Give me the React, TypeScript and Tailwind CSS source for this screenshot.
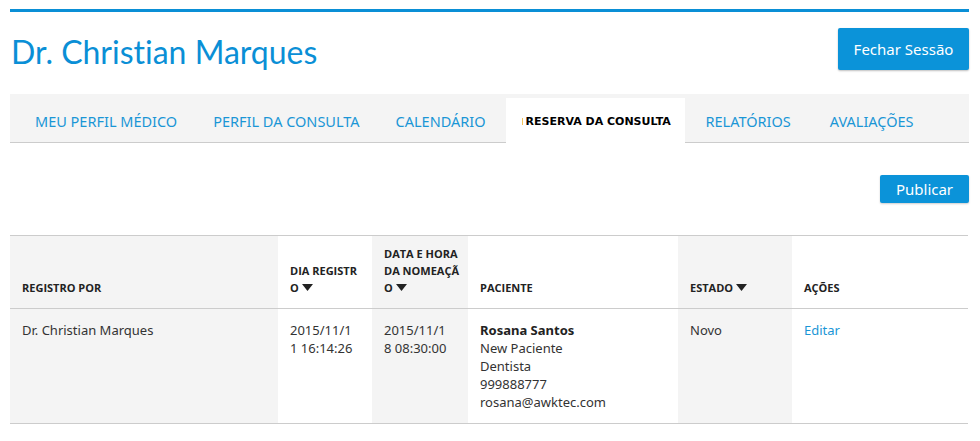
import React from "react";

const Caret = () => (
  <svg width="11" height="7" viewBox="0 0 11 7" className="inline-block ml-[3px] align-[1px]">
    <path d="M0 0 H11 L5.5 7 Z" fill="#222" />
  </svg>
);

export default function App() {
  const tabs = ["MEU PERFIL MÉDICO", "PERFIL DA CONSULTA", "CALENDÁRIO"];
  const tabs2 = ["RELATÓRIOS", "AVALIAÇÕES"];
  const body = "font-['Noto_Sans',sans-serif]";
  return (
    <div className="w-[980px] h-[441px] bg-white overflow-hidden">
      <div className="ml-[10px] w-[959px] pt-[9px]">
        <div className="h-[3px] bg-[#0a8fd6]" />
        <div className="flex justify-between items-start">
          <h1 className="font-['Lato',sans-serif] text-[32px] leading-[40px] text-[#0a8fd6] mt-[20px] ml-[1px] [font-variant-ligatures:none]">
            Dr. Christian Marques
          </h1>
          <button className={`${body} mt-[16px] h-[42px] w-[131px] bg-[#0b93d9] text-white text-[15px] rounded-[2px] shadow-[0_1px_2px_rgba(0,0,0,0.25)]`}>
            Fechar Sessão
          </button>
        </div>
        <div className={`${body} mt-[22px] h-[49px] bg-[#f4f4f4] border-b border-[#cccccc] flex items-end pl-[7px]`}>
          {tabs.map((t) => (
            <div key={t} className="px-[18px] h-[44px] pt-[4px] flex items-center text-[14.5px] text-[#1a96d6]">
              {t}
            </div>
          ))}
          <div className="ml-[2px] w-[179px] h-[45px] -mb-px bg-white flex items-center pl-[16px] pt-[3px]">
            <span className="w-px h-[7px] bg-[#f3c35a] mr-[3px] -mt-[2px]" />
            <span className="font-['DejaVu_Sans',sans-serif] font-bold text-[11px] text-black">RESERVA DA CONSULTA</span>
          </div>
          {tabs2.map((t) => (
            <div key={t} className="px-[18px] ml-[3px] h-[44px] pt-[4px] flex items-center text-[14.5px] text-[#1a96d6]">
              {t}
            </div>
          ))}
        </div>
        <div className="flex justify-end mt-[32px]">
          <button className={`${body} h-[28px] w-[89px] bg-[#0b93d9] text-white text-[15px] rounded-[2px] shadow-[0_1px_2px_rgba(0,0,0,0.2)]`}>
            Publicar
          </button>
        </div>
        <table className={`${body} mt-[32px] w-[958px] table-fixed border-collapse text-[#333]`}>
          <colgroup>
            <col className="w-[268px]" />
            <col className="w-[94px]" />
            <col className="w-[96px]" />
            <col className="w-[210px]" />
            <col className="w-[114px]" />
            <col className="w-[176px]" />
          </colgroup>
          <thead>
            <tr className="border-t border-b border-[#cccccc] h-[73px] font-['Open_Sans',sans-serif] font-bold text-[11px] leading-[17px] text-[#222]">
              <th className="bg-[#f4f4f4] text-left align-bottom px-[12px] pb-[12px]">REGISTRO POR</th>
              <th className="text-left align-bottom px-[12px] pb-[12px] whitespace-nowrap">
                <div>DIA REGISTR</div>
                <div>O<Caret /></div>
              </th>
              <th className="bg-[#f4f4f4] text-left align-bottom px-[12px] pb-[12px] whitespace-nowrap">
                <div>DATA E HORA</div>
                <div>DA NOMEAÇÃ</div>
                <div>O<Caret /></div>
              </th>
              <th className="text-left align-bottom px-[12px] pb-[12px]">PACIENTE</th>
              <th className="bg-[#f4f4f4] text-left align-bottom px-[12px] pb-[12px]">ESTADO<Caret /></th>
              <th className="text-left align-bottom px-[12px] pb-[12px]">AÇÕES</th>
            </tr>
          </thead>
          <tbody>
            <tr className="border-b border-[#cccccc] text-[13px] leading-[18px] align-top">
              <td className="bg-[#f4f4f4] px-[12px] pt-[12px] pb-[12px]">Dr. Christian Marques</td>
              <td className="px-[12px] pt-[12px]">
                <div>2015/11/1</div>
                <div>1 16:14:26</div>
              </td>
              <td className="bg-[#f4f4f4] px-[12px] pt-[12px]">
                <div>2015/11/1</div>
                <div>8 08:30:00</div>
              </td>
              <td className="px-[12px] pt-[12px] pb-[12px]">
                <div className="font-bold text-[#222]">Rosana Santos</div>
                <div>New Paciente</div>
                <div>Dentista</div>
                <div>999888777</div>
                <div>rosana@awktec.com</div>
              </td>
              <td className="bg-[#f4f4f4] px-[12px] pt-[12px]">Novo</td>
              <td className="px-[12px] pt-[12px] text-[#1a96d6]">Editar</td>
            </tr>
          </tbody>
        </table>
      </div>
    </div>
  );
}
